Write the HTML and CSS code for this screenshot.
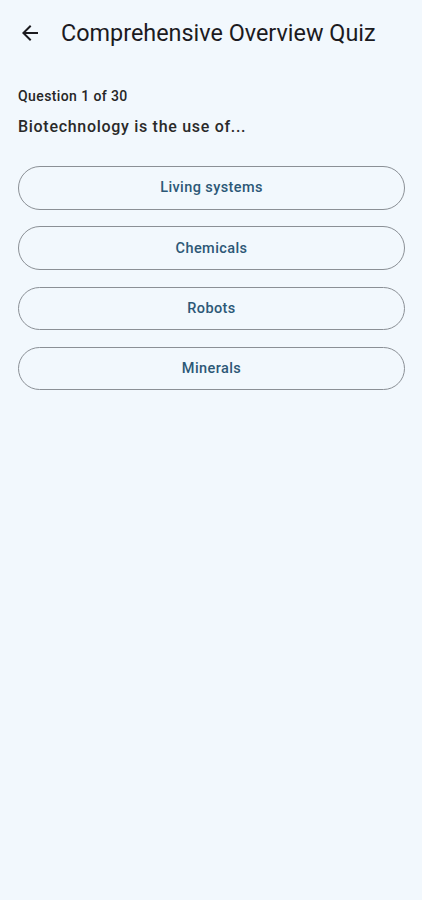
FILE: index.html
```html
<!DOCTYPE html>
<html lang="en">
<head>
  <meta charset="UTF-8" />
  <meta name="viewport" content="width=device-width, initial-scale=1.0"/>
  <title>Comprehensive Overview Quiz</title>
  <link rel="stylesheet" href="styles.css">
</head>
<body>

  <!-- Top app bar -->
  <header class="app-bar">
    <button class="back-btn" aria-label="Back">
      <svg width="24" height="24" viewBox="0 0 24 24">
        <path d="M20 11H7.83l5.59-5.59L12 4l-8 8 8 8 1.41-1.41L7.83 13H20v-2z" fill="#1c1b1f"/>
      </svg>
    </button>
    <h1 class="app-title">Comprehensive Overview Quiz</h1>
  </header>

  <main class="quiz">
    <p class="quiz-progress">Question 1 of 30</p>
    <p class="quiz-question">Biotechnology is the use of...</p>

    <div class="answers">
      <button class="answer">Living systems</button>
      <button class="answer">Chemicals</button>
      <button class="answer">Robots</button>
      <button class="answer">Minerals</button>
    </div>
  </main>

</body>
</html>
```

FILE: styles.css
```css
* {
  box-sizing: border-box;
  font-family: Roboto, 'Liberation Sans', sans-serif;
}

body {
  margin: 0;
  background: #f2f8fd;
  color: #1c1b1f;
  height: 900px;
}

.app-bar {
  display: flex;
  align-items: center;
  height: 66px;
  padding: 0 0 0 18px;
}

.back-btn {
  background: none;
  border: none;
  padding: 0;
  width: 24px;
  height: 24px;
  display: flex;
  cursor: pointer;
}

.app-title {
  margin: 0 0 0 19px;
  font-size: 23.4px;
  font-weight: 400;
  letter-spacing: 0;
}

.quiz {
  padding: 18px 17px 0 18px;
}

.quiz-progress {
  margin: 0;
  font-size: 14px;
  font-weight: 500;
  letter-spacing: 0.4px;
  line-height: 24px;
  color: #262626;
}

.quiz-question {
  margin: 7px 0 0;
  font-size: 16px;
  font-weight: 500;
  letter-spacing: 0.7px;
  line-height: 24px;
  color: #2a2a2a;
}

.answers {
  display: flex;
  flex-direction: column;
  gap: 16.8px;
  margin-top: 27px;
}

.answer {
  height: 43.5px;
  width: 100%;
  background: none;
  border: 1.2px solid #8b9096;
  border-radius: 22px;
  color: #2d5877;
  font-size: 14.5px;
  font-weight: 500;
  letter-spacing: 0.4px;
  cursor: pointer;
}
```
